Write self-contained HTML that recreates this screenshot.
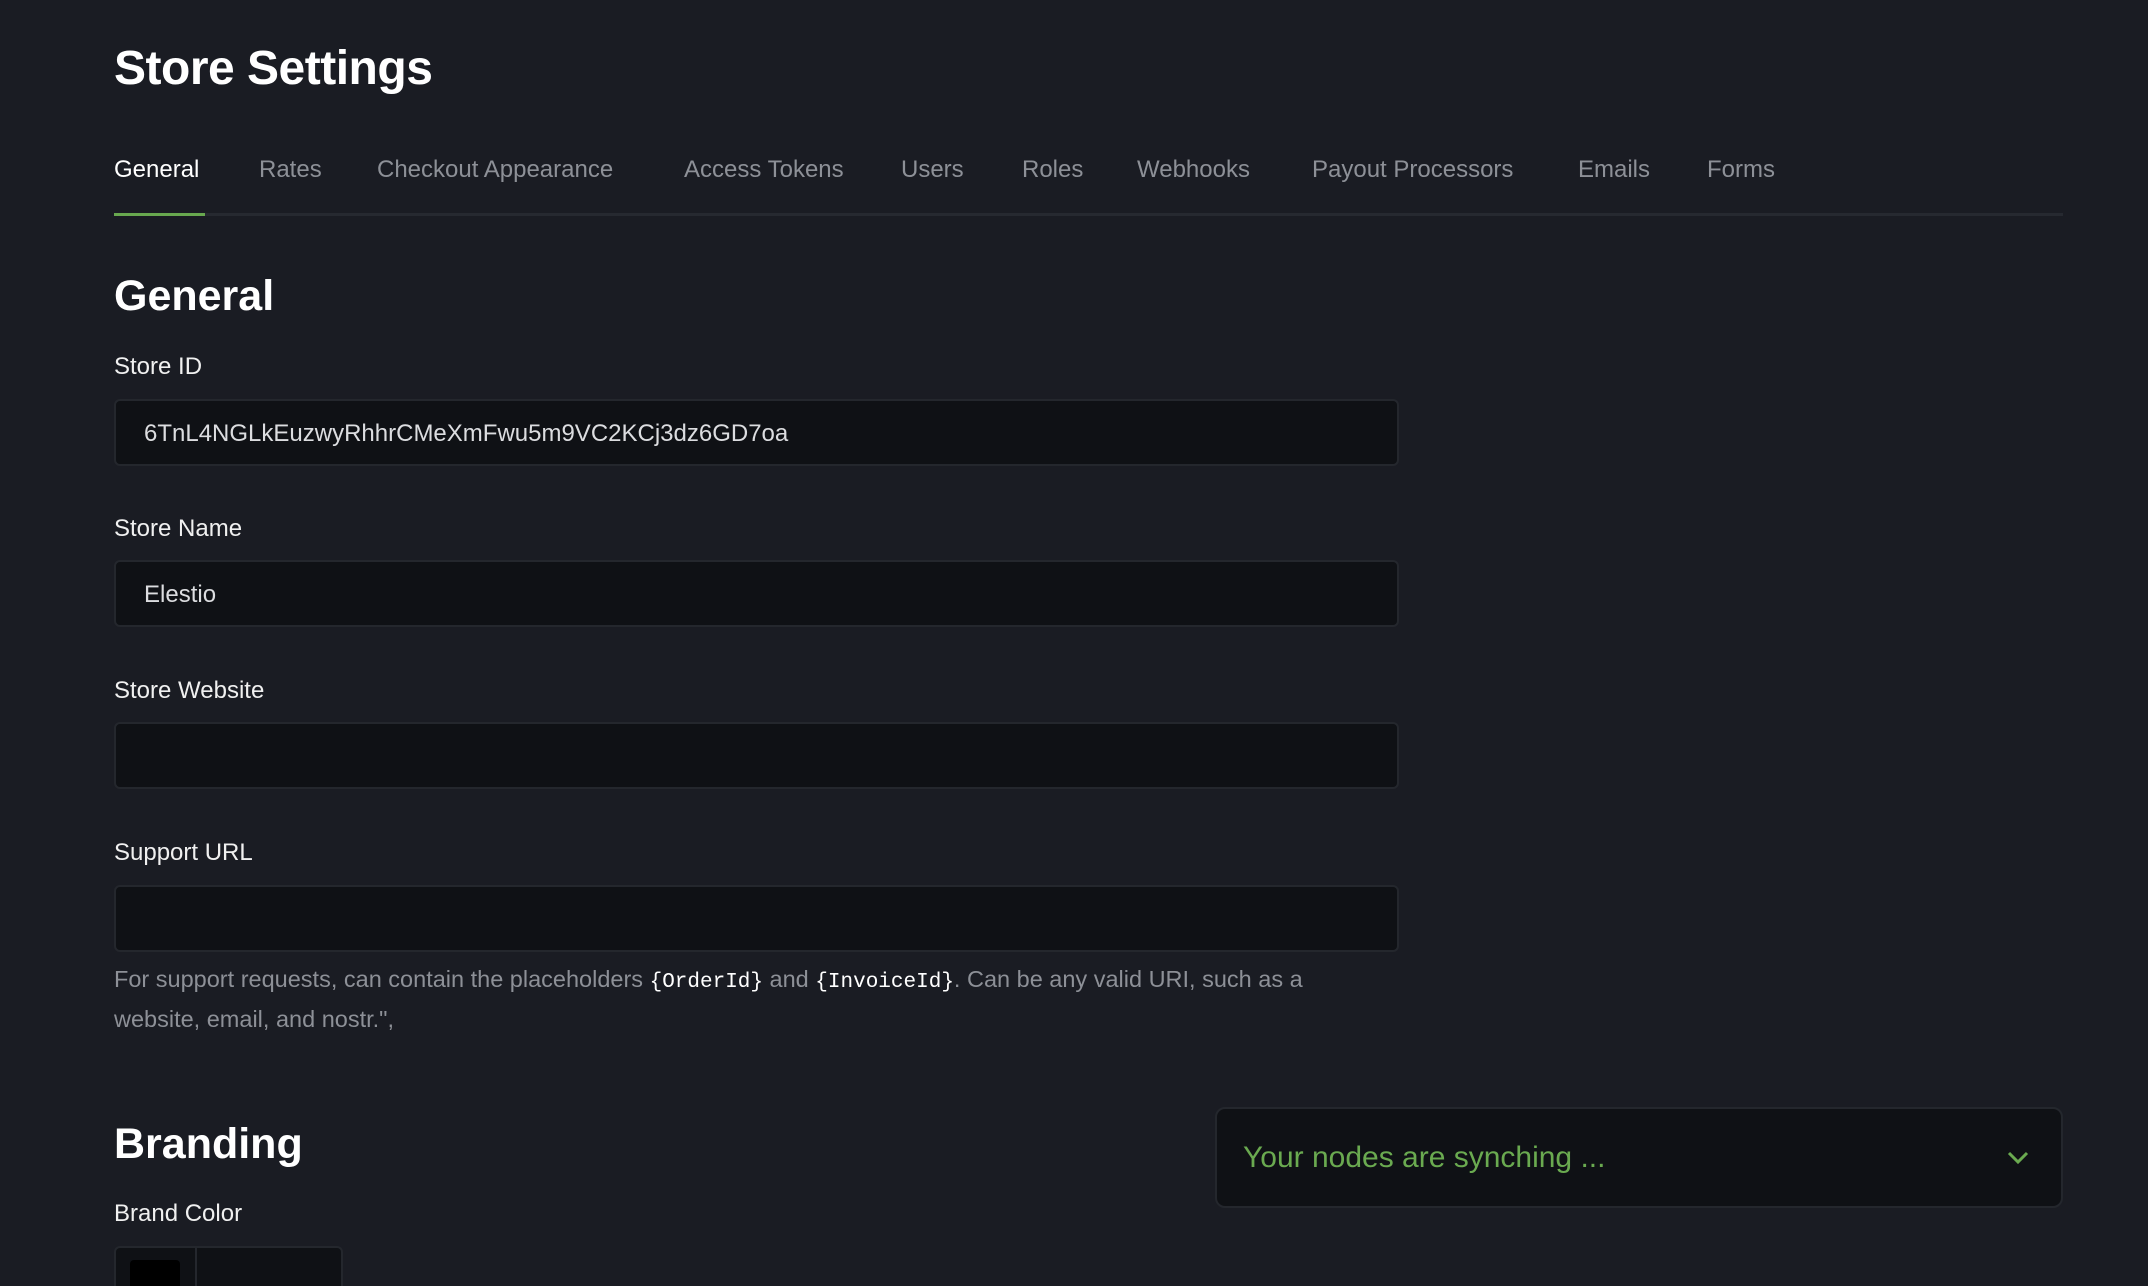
<!DOCTYPE html>
<html><head><meta charset="utf-8"><style>
*{box-sizing:border-box;margin:0;padding:0}
html,body{width:2148px;height:1286px;overflow:hidden;background:#1a1c23;font-family:"Liberation Sans",sans-serif;color:#fff;position:relative}
.abs{position:absolute}
h1{position:absolute;left:114px;top:41px;font-size:48px;font-weight:bold;letter-spacing:-0.5px}
.tab{position:absolute;top:156px;font-size:24px;color:#8d9097}
.tab.active{color:#fff}
.line{position:absolute;left:114px;top:213px;width:1949px;height:3px;background:#262930}
.uline{position:absolute;left:114px;top:213px;width:91px;height:3px;background:#68a84f}
h2{position:absolute;left:114px;font-size:43px;font-weight:bold}
.lbl{position:absolute;left:114px;font-size:24px;color:#f0f0f0}
.inp{position:absolute;left:114px;width:1285px;height:67px;background:#0f1115;border:2px solid #24272d;border-radius:6px;font-size:24px;color:#dcdde0;padding:19px 0 0 28px}
.help{position:absolute;left:114px;top:961px;width:1270px;font-size:23.5px;line-height:37px;color:#8d9097}
code{font-family:"Liberation Mono",monospace;color:#fff;font-size:21px}
.sync{position:absolute;left:1215px;top:1107px;width:848px;height:101px;background:#0f1115;border:2px solid #24272d;border-radius:10px}
</style></head><body>
<h1>Store Settings</h1>
<div class="tab active" style="left:114px">General</div>
<div class="tab" style="left:259px">Rates</div>
<div class="tab" style="left:377px">Checkout Appearance</div>
<div class="tab" style="left:684px">Access Tokens</div>
<div class="tab" style="left:901px">Users</div>
<div class="tab" style="left:1022px">Roles</div>
<div class="tab" style="left:1137px">Webhooks</div>
<div class="tab" style="left:1312px">Payout Processors</div>
<div class="tab" style="left:1578px">Emails</div>
<div class="tab" style="left:1707px">Forms</div>
<div class="line"></div><div class="uline"></div>
<h2 style="top:272px">General</h2>
<div class="lbl" style="top:353px">Store ID</div>
<div class="inp" style="top:399px">6TnL4NGLkEuzwyRhhrCMeXmFwu5m9VC2KCj3dz6GD7oa</div>
<div class="lbl" style="top:515px">Store Name</div>
<div class="inp" style="top:560px">Elestio</div>
<div class="lbl" style="top:677px">Store Website</div>
<div class="inp" style="top:722px"></div>
<div class="lbl" style="top:839px">Support URL</div>
<div class="inp" style="top:885px"></div>
<div class="help">For support requests, can contain the placeholders <code>{OrderId}</code> and <code>{InvoiceId}</code>. Can be any valid URI, such as a website, email, and nostr.",</div>
<h2 style="top:1120px">Branding</h2>
<div class="lbl" style="top:1200px">Brand Color</div>
<div class="abs" style="left:114px;top:1246px;width:229px;height:40px;background:#0f1115;border:2px solid #24272d;border-bottom:none;border-radius:6px 6px 0 0"></div>
<div class="abs" style="left:195px;top:1248px;width:2px;height:38px;background:#24272d"></div>
<div class="abs" style="left:130px;top:1260px;width:50px;height:26px;background:#000;border-radius:4px 4px 0 0"></div>
<div class="sync">
<div class="abs" style="left:26px;top:32px;font-size:30px;color:#6aaa50">Your nodes are synching ...</div>
<svg class="abs" style="left:790px;top:41px" width="22" height="16" viewBox="0 0 22 16"><path d="M2 3l9 9 9-9" fill="none" stroke="#6aaa50" stroke-width="3"/></svg>
</div>
</body></html>
